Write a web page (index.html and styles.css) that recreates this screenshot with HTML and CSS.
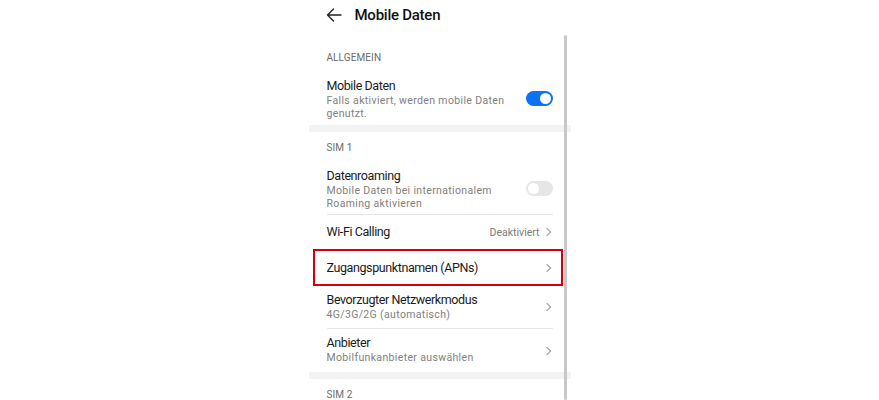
FILE: index.html
```html
<!DOCTYPE html>
<html lang="de">

<head>
    <meta charset="UTF-8">
    <meta name="viewport" content="width=device-width, initial-scale=1.0">
    <title>Mobile Daten</title>
    <link rel="stylesheet" href="styles.css">
</head>

<body>
    <main class="phone">
        <header class="topbar">
            <svg class="back" width="16" height="14" viewBox="0 0 16 14">
                <path d="M15 7H1.5M7.5 1L1.5 7l6 6" fill="none" stroke="#222" stroke-width="1.4" stroke-linecap="round" stroke-linejoin="round"/>
            </svg>
            <h1>Mobile Daten</h1>
        </header>

        <div class="content">
            <div class="scrollbar"></div>

            <section class="group first">
                <h2 class="group-title">ALLGEMEIN</h2>
                <div class="item item-tall">
                    <div class="item-text">
                        <p class="item-title">Mobile Daten</p>
                        <p class="item-sub">Falls aktiviert, werden mobile Daten genutzt.</p>
                    </div>
                    <span class="switch on"></span>
                </div>
            </section>

            <section class="group">
                <h2 class="group-title">SIM 1</h2>
                <div class="item item-tall line">
                    <div class="item-text">
                        <p class="item-title">Datenroaming</p>
                        <p class="item-sub">Mobile Daten bei internationalem Roaming aktivieren</p>
                    </div>
                    <span class="switch"></span>
                </div>
                <div class="item">
                    <p class="item-title">Wi-Fi Calling</p>
                    <span class="item-value">Deaktiviert <i class="chevron"></i></span>
                </div>
                <div class="item marked">
                    <p class="item-title">Zugangspunktnamen (APNs)</p>
                    <span class="item-value"><i class="chevron"></i></span>
                </div>
                <div class="item item-two line">
                    <div class="item-text">
                        <p class="item-title">Bevorzugter Netzwerkmodus</p>
                        <p class="item-sub">4G/3G/2G (automatisch)</p>
                    </div>
                    <span class="item-value"><i class="chevron"></i></span>
                </div>
                <div class="item item-two">
                    <div class="item-text">
                        <p class="item-title">Anbieter</p>
                        <p class="item-sub">Mobilfunkanbieter auswählen</p>
                    </div>
                    <span class="item-value"><i class="chevron"></i></span>
                </div>
            </section>

            <section class="group last">
                <h2 class="group-title">SIM 2</h2>
            </section>
        </div>
    </main>
</body>

</html>
```

FILE: styles.css
```css
* {
    box-sizing: border-box;
}

body {
    margin: 0;
    background: #fff;
    font-family: Roboto, "Noto Sans", "Liberation Sans", sans-serif;
    color: #1a1a1a;
    height: 400px;
    overflow: hidden;
}

p {
    margin: 0;
}

.phone {
    width: 262px;
    margin: 0 auto;
}

.topbar {
    height: 35px;
    display: flex;
    align-items: center;
    padding: 0 17px 5px;
    gap: 13px;
}

.topbar h1 {
    margin: 0;
    font-size: 15px;
    font-weight: 500;
    letter-spacing: -0.25px;
    color: #111;
}

.content {
    position: relative;
    height: 365px;
    overflow: hidden;
}

/* scroll indicator on the right side */
.scrollbar {
    position: absolute;
    right: 4px;
    top: 0;
    width: 3px;
    height: 365px;
    background: #c8c8c8;
    border-radius: 2px;
}

.group {
    border-bottom: 7px solid #f3f3f3;
}

.group.first {
    padding-top: 7px;
}

.group.last {
    border-bottom: 0;
}

.group-title {
    margin: 0;
    height: 35px;
    padding: 9px 18px 0;
    font-size: 10px;
    line-height: 14px;
    font-weight: 400;
    color: #6b6b6b;
    letter-spacing: 0.1px;
}

.item {
    display: flex;
    align-items: center;
    justify-content: space-between;
    margin: 0 18px;
    height: 34px;
}

.item-tall {
    height: 48px;
    align-items: flex-start;
    padding-top: 1px;
}

.item-two {
    height: 43px;
}

.item-two .item-text {
    align-self: flex-start;
    padding-top: 6px;
}

.line {
    border-bottom: 1px solid #e8e8e8;
}

.item-text {
    flex: 1;
    padding-right: 12px;
}

.item-title {
    font-size: 12.5px;
    letter-spacing: -0.4px;
    color: #1a1a1a;
    line-height: 16px;
}

.item-sub {
    font-size: 10.5px;
    letter-spacing: 0.35px;
    color: #808080;
    line-height: 12.5px;
    margin-top: 1px;
}

.item-value {
    display: flex;
    align-items: center;
    gap: 4px;
    font-size: 10.5px;
    color: #7a7a7a;
}

.chevron {
    display: inline-block;
    width: 6px;
    height: 6px;
    border-top: 1.2px solid #999;
    border-right: 1.2px solid #999;
    transform: rotate(45deg);
    margin-right: 3px;
}

.switch {
    position: relative;
    flex: none;
    width: 27px;
    height: 15px;
    border-radius: 8px;
    background: #e6e6e6;
    margin-top: 13px;
}

.switch::after {
    content: "";
    position: absolute;
    left: 2px;
    top: 2px;
    width: 11px;
    height: 11px;
    border-radius: 50%;
    background: #fff;
}

.switch.on {
    background: #0a73f5;
}

.switch.on::after {
    left: 14px;
}

.marked {
    height: 37px;
    margin: 0 8px 0 4px;
    padding: 0 8px 0 12px;
    border: 2px solid #d3000a;
}
```
